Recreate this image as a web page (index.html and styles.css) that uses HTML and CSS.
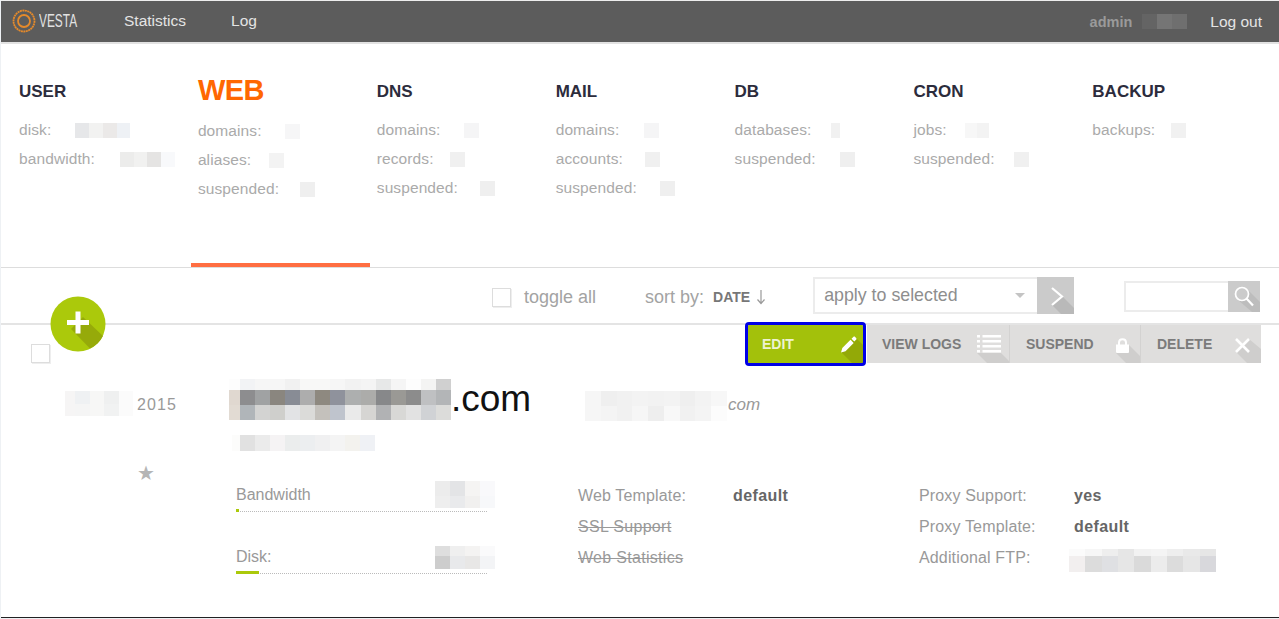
FILE: index.html
```html
<!DOCTYPE html>
<html lang="en">
<head>
  <meta charset="UTF-8">
  <meta name="viewport" content="width=device-width, initial-scale=1.0">
  <title>Vesta - WEB</title>
  <link rel="stylesheet" href="styles.css">
</head>
<body>
  <div class="frame">
    <header class="top-bar">
      <a class="logo">
        <svg width="24" height="24" viewBox="0 0 24 24">
          <circle cx="12" cy="12" r="10.500" fill="none" stroke="#e58a2b" stroke-width="1.800" stroke-dasharray="2 .5"/>
          <circle cx="12" cy="12" r="6" fill="none" stroke="#e58a2b" stroke-width="1.800"/>
        </svg>
        <span class="logo-text">VESTA</span>
      </a>
      <a class="top-link link-stats">Statistics</a>
      <a class="top-link">Log</a>
      <span class="top-user">admin</span>
      <span class="mosaic m-user" data-colors="#646464 #757575 #6f6f6f"></span>
      <a class="top-link link-out">Log out</a>
    </header>

    <nav class="stats">
      <div class="stat-col">
        <h2>USER</h2>
        <p>disk:<span class="mosaic m-disk" data-colors="#e6e7e9 #f2f2f1 #ebe9e8 #eef1f5"></span></p>
        <p>bandwidth:<span class="mosaic m-band" data-colors="#ececeb #f1f1f0 #e5e4e3 #f8f9fb"></span></p>
      </div>
      <div class="stat-col active">
        <h2>WEB</h2>
        <p>domains:<span class="mosaic m-one g23" data-colors="#f6f6f7"></span></p>
        <p>aliases:<span class="mosaic m-one g18" data-colors="#f3f3f3"></span></p>
        <p>suspended:<span class="mosaic m-one g21" data-colors="#efefef"></span></p>
      </div>
      <div class="stat-col">
        <h2>DNS</h2>
        <p>domains:<span class="mosaic m-one g24" data-colors="#f5f5f6"></span></p>
        <p>records:<span class="mosaic m-one g16" data-colors="#f0f0f0"></span></p>
        <p>suspended:<span class="mosaic m-one g22" data-colors="#efefef"></span></p>
      </div>
      <div class="stat-col">
        <h2>MAIL</h2>
        <p>domains:<span class="mosaic m-one g25" data-colors="#f5f5f6"></span></p>
        <p>accounts:<span class="mosaic m-one g22" data-colors="#f0f0f0"></span></p>
        <p>suspended:<span class="mosaic m-one g23" data-colors="#efefef"></span></p>
      </div>
      <div class="stat-col">
        <h2>DB</h2>
        <p>databases:<span class="mosaic m-thin" data-colors="#f1f1f1"></span></p>
        <p>suspended:<span class="mosaic m-one g24" data-colors="#efefef"></span></p>
      </div>
      <div class="stat-col">
        <h2>CRON</h2>
        <p>jobs:<span class="mosaic m-jobs" data-colors="#f7f7f7 #f3f3f3"></span></p>
        <p>suspended:<span class="mosaic m-one g19" data-colors="#f0f0f0"></span></p>
      </div>
      <div class="stat-col">
        <h2>BACKUP</h2>
        <p>backups:<span class="mosaic m-one g16" data-colors="#f1f1f1"></span></p>
      </div>
    </nav>

    <section class="toolbar">
      <a class="add-btn">
        <svg width="56" height="56" viewBox="0 0 56 56">
          <circle cx="28" cy="28" r="27.500" fill="#abc90b"/>
          <path d="M33 21 L53 40 A27.500 27.500 0 0 1 40 52.500 L21 33 Z" fill="#96aa0a"/>
          <path d="M25.500 15.500h5v8.500h8.500v5h-8.500v8.500h-5v-8.500h-8.500v-5h8.500z" fill="#fff"/>
        </svg>
      </a>
      <div class="toolbar-sort">
        <span class="check"></span>
        <span class="toggle-label">toggle all</span>
        <span class="sort-label">sort by:</span>
        <b class="sort-value">DATE</b>
        <svg class="sort-arrow" width="10" height="16" viewBox="0 0 10 16">
          <path d="M5 1v13M1.500 10.500L5 14.500l3.500-4" fill="none" stroke="#999" stroke-width="1.200"/>
        </svg>
      </div>
      <div class="apply-select">
        <span>apply to selected</span>
        <i class="caret"></i>
      </div>
      <a class="apply-btn">
        <svg width="37" height="37" viewBox="0 0 37 37">
          <path d="M15 28 L24 37 H37 V31 L25 19 Z" fill="#b9b9b9"/>
          <path d="M15 11l10 8.500-10 8.500" fill="none" stroke="#fff" stroke-width="2.200"/>
        </svg>
      </a>
      <div class="search-box"></div>
      <a class="search-btn">
        <svg width="32" height="31" viewBox="0 0 32 31">
          <path d="M19 8 L32 21 V31 H24 L10 19 Z" fill="#bdbdbd"/>
          <circle cx="14" cy="13" r="6.500" fill="#cbcbcb" stroke="#fff" stroke-width="1.700"/>
          <path d="M18.500 17.500l6.500 7" stroke="#fff" stroke-width="2.200"/>
        </svg>
      </a>
    </section>

    <section class="row">
      <div class="row-head">
        <span class="check check-row"></span>
        <div class="actions">
          <a class="action action-edit">
            <span>EDIT</span>
            <svg width="38" height="38" viewBox="0 0 38 38">
              <path d="M16 27 L27 38 H38 V20 L31 13 Z" fill="#93a907"/>
              <path d="M16 27.500l1.300-4.500 8.200-8.200 3.200 3.200-8.200 8.200zM26.500 13.800l1.800-1.800c.6-.6 1.300-.6 1.800 0l1 1c.6.600.6 1.200 0 1.800l-1.800 1.800z" fill="#fff"/>
            </svg>
          </a>
          <a class="action action-logs">
            <span>VIEW LOGS</span>
            <svg width="38" height="38" viewBox="0 0 38 38">
              <path d="M6 28 H30 L38 36 V38 H16 Z" fill="#cfcecd"/>
              <path d="M6 10h3v2.500h-3zM11.500 10h18.500v2.500h-18.500zM6 15h3v2.500h-3zM11.500 15h18.500v2.500h-18.500zM6 20h3v2.500h-3zM11.500 20h18.500v2.500h-18.500zM6 25h3v2.500h-3zM11.500 25h18.500v2.500h-18.500z" fill="#fff"/>
            </svg>
          </a>
          <a class="action action-suspend">
            <span>SUSPEND</span>
            <svg width="38" height="38" viewBox="0 0 38 38">
              <path d="M14 28 L24 38 H38 V31 L27 20 Z" fill="#cfcecd"/>
              <path d="M14 19.500h13v7c0 1-.5 1.500-1.500 1.500h-10c-1 0-1.500-.5-1.500-1.500z" fill="#fff"/>
              <path d="M17 20v-2.500c0-4.500 7-4.500 7 0v2.500" fill="none" stroke="#fff" stroke-width="2"/>
            </svg>
          </a>
          <a class="action action-delete">
            <span>DELETE</span>
            <svg width="38" height="38" viewBox="0 0 38 38">
              <path d="M13 27 L24 38 H38 V24 L26 14 Z" fill="#cfcecd"/>
              <path d="M13 14l13 13M26 14l-13 13" stroke="#fff" stroke-width="2.600"/>
            </svg>
          </a>
        </div>
      </div>

      <div class="row-body">
        <div class="row-side">
          <div class="row-date">
            <span class="mosaic m-date" data-col1="10" data-colors="#f6f5f5 #eff1f3 #f7f7f6 #eff0f0 #fbfbfb/#f6f5f5 #f5f5f5 #f7f7f6 #f1f2f2 #fbfbfb"></span>
            <span class="date-year">2015</span>
          </div>
          <span class="star">★</span>
        </div>
        <div class="row-main">
          <div class="domain-line">
            <span class="mosaic m-domain" data-col1="11" data-row1="11" data-colors="#fdfdfd #f2f3f5 #f6f6f6 #f6f6f6 #f1f1f1 #f8f8f7 #f8f8f7 #f6f6f6 #f2f2f2 #f4f4f4 #e7e8e8 #f5f5f5 #fdfdfd #f4f4f3 #d0d0d0/#e0d8d0 #8d8d8f #a0a2a3 #8a867f #888c95 #adadad #8e8980 #8f929c #adafaf #acacaa #87888a #9a9995 #8c8c8c #bfc0c2 #b3b5b7/#e2dbd3 #b0b5b9 #d3d3d2 #cfcfcc #e2e3e5 #dbdbd9 #c4c1bc #bfc4cd #eaeaea #d6d5d3 #b1b2b4 #d8d8d6 #e2e2e2 #d0d2d5 #dcdcda"></span>
            <span class="domain-tld">.com</span>
            <span class="mosaic m-alias-name" data-colors="#f6f6f6 #efefef #f1f1f1 #f3f3f3 #f2f2f2 #f3f3f3 #efefef #f3f3f3 #f7f7f7/#f6f6f6 #f4f4f4 #f1f1f1 #f6f6f6 #eeeeee #f8f8f8 #f1f1f1 #f4f4f4 #fcfcfc"></span>
            <em class="alias-tld">com</em>
          </div>
          <span class="mosaic m-sub" data-col1="8" data-colors="#fcfcfb #e1e1e1 #ebebeb #f5f3f4 #ebeded #eceef0 #f0f0f1 #f4f4f4 #f3f2ee #eff1f5"></span>

          <div class="details">
            <div class="usage">
              <div class="usage-item">
                <div class="usage-head">
                  <span>Bandwidth</span>
                  <span class="mosaic m-usage" data-row1="15" data-colors="#ececec #e3e4e6 #f5f4f3 #f9f9fb/#eeeeee #e9eaec #f1f0ef #f7f8fa"></span>
                </div>
                <div class="bar"><div class="bar-fill" style="width: 1.2%"></div></div>
              </div>
              <div class="usage-item">
                <div class="usage-head">
                  <span>Disk:</span>
                  <span class="mosaic m-usage m-usage-disk" data-row1="10" data-colors="#dedede #efefef #f4f3f2 #fafafb/#cdcdcd #e8e9eb #e8e7e6 #f3f4f6"></span>
                </div>
                <div class="bar"><div class="bar-fill" style="width: 9%"></div></div>
              </div>
            </div>
            <div class="props">
              <div class="prop"><span>Web Template:</span><b>default</b></div>
              <div class="prop off"><span>SSL Support</span></div>
              <div class="prop off"><span>Web Statistics</span></div>
            </div>
            <div class="props">
              <div class="prop"><span>Proxy Support:</span><b>yes</b></div>
              <div class="prop"><span>Proxy Template:</span><b>default</b></div>
              <div class="prop"><span>Additional FTP:</span><span class="mosaic m-ftp" data-row1="7" data-colors="#fbfbfb #f6f6f6 #eeeeee #e6e6e6 #f2f2f2 #f4f4f4 #eeeeee #e9e9e9 #e6e6e6/#f2efef #dcdcdc #dfe0e3 #e6e6e6 #dadada #ececec #dcdcdc #e6e6e6 #d8d8dc"></span></div>
            </div>
          </div>
        </div>
      </div>
    </section>
  </div>
  <script src="mosaic.js"></script>
</body>
</html>
```

FILE: styles.css
```css
* {
  box-sizing: border-box;
}

body {
  margin: 0;
  font-family: "Liberation Sans", Arial, sans-serif;
  background: #eef1f4;
  color: #999;
}

a {
  cursor: pointer;
}

.frame {
  width: 1278px;
  height: 618px;
  margin-left: 1px;
  background: #fff;
  border-bottom: 1px solid #222;
  overflow: hidden;
  position: relative;
}

/* top bar */
.top-bar {
  display: flex;
  align-items: center;
  height: 44px;
  padding-right: 17px;
  background: #5c5c5c;
  border-top: 1px solid #eee;
  border-bottom: 2px solid #e2e2e2;
  font-size: 15.500px;
}

.logo {
  display: flex;
  align-items: center;
  width: 123px;
  padding-left: 11px;
  margin-bottom: 1px;
}

.logo-text {
  width: 38px;
  margin-left: 3px;
  font-size: 18px;
  color: #e2e2e2;
  transform: scaleX(.66);
  transform-origin: left center;
}

.top-link {
  margin-bottom: 2px;
  color: #e4e4e4;
}

.link-stats {
  margin-right: 45px;
}

.top-user {
  margin-left: auto;
  font-size: 14.500px;
  font-weight: bold;
  color: #9a9a9a;
}

.link-out {
  margin-left: 23px;
  margin-bottom: 0;
}

/* mosaics stand in for the blurred values */
.mosaic {
  display: inline-grid;
  vertical-align: middle;
}

.m-user {
  width: 45px;
  height: 15px;
  margin-left: 10px;
}

.m-disk {
  width: 55px;
  height: 15px;
  margin-left: 24px;
}

.m-band {
  width: 55px;
  height: 15px;
  margin-left: 25px;
}

.m-one {
  width: 15px;
  height: 15px;
}

.g16 {
  margin-left: 16px;
}

.g18 {
  margin-left: 18px;
}

.g19 {
  margin-left: 19px;
}

.g21 {
  margin-left: 21px;
}

.g22 {
  margin-left: 22px;
}

.g23 {
  margin-left: 23px;
}

.g24 {
  margin-left: 24px;
}

.g25 {
  margin-left: 25px;
}

.m-thin {
  width: 9px;
  height: 15px;
  margin-left: 20px;
}

.m-jobs {
  width: 24px;
  height: 15px;
  margin-left: 18px;
}

/* stats tabs */
.stats {
  display: grid;
  grid-template-columns: repeat(7, 178.900px);
  height: 224px;
  padding-left: 11px;
  border-bottom: 1px solid #ddd;
}

.stat-col {
  padding: 36px 7px 0;
  border-bottom: 4px solid transparent;
}

.stat-col h2 {
  margin: 0 0 11px;
  font-size: 17px;
  line-height: 24px;
  color: #2c2c3c;
}

.stat-col p {
  margin: 0;
  font-size: 15.500px;
  letter-spacing: .1px;
  line-height: 29px;
  color: #aaa;
  white-space: nowrap;
}

.stat-col.active {
  border-bottom-color: #ff6e42;
}

.stat-col.active h2 {
  margin: -2px 0 14px;
  font-size: 29px;
  letter-spacing: -.5px;
  color: #ff6701;
}

/* toolbar */
.toolbar {
  display: flex;
  align-items: center;
  position: relative;
  height: 57px;
  padding-left: 491px;
  border-bottom: 2px solid #e4e4e4;
}

.toolbar-sort {
  display: flex;
  align-items: center;
  padding-top: 3px;
}

.add-btn {
  position: absolute;
  left: 49px;
  top: 28px;
  height: 56px;
  z-index: 2;
}

.check {
  display: block;
  flex: none;
  width: 19px;
  height: 19px;
  background: #fff;
  border: 1px solid #ddd;
  box-shadow: 1px 1px 0 #eee;
}

.toggle-label {
  margin-left: 13px;
  font-size: 18px;
  color: #a3a3a3;
}

.sort-label {
  margin-left: 49px;
  font-size: 18px;
  color: #a3a3a3;
}

.sort-value {
  margin-left: 9px;
  font-size: 14px;
  color: #777;
}

.sort-arrow {
  margin-left: 6px;
}

.apply-select {
  display: flex;
  align-items: center;
  justify-content: space-between;
  width: 224px;
  height: 37px;
  margin-left: 47px;
  padding: 0 12px 0 9px;
  border: 2px solid #ececec;
  border-right: 0;
  font-size: 17.800px;
  color: #8e8e8e;
}

.caret {
  border: 5px solid transparent;
  border-top: 5px solid #c4c4c4;
  border-bottom: 0;
}

.apply-btn {
  height: 37px;
  background: #cbcbcb;
}

.search-box {
  width: 104px;
  height: 31px;
  margin: 1px 0 0 50px;
  border: 2px solid #ececec;
  border-right: 0;
}

.search-btn {
  height: 31px;
  margin-top: 1px;
  background: #cbcbcb;
}

.apply-btn svg,
.search-btn svg {
  display: block;
}

/* web domain row */
.row-head {
  display: flex;
  height: 38px;
}

.check-row {
  margin: 19px 0 0 30px;
}

.actions {
  display: flex;
  margin-left: auto;
  margin-right: 18px;
}

.action {
  display: flex;
  align-items: center;
  justify-content: space-between;
  height: 38px;
  padding-left: 16px;
  background: #dfdedd;
  font-size: 14px;
  font-weight: bold;
  color: #7b7b7b;
  overflow: hidden;
}

.action svg {
  flex: none;
}

.action-edit {
  width: 115px;
  padding-left: 14px;
  margin-right: 4px;
  background: #a3c10b;
  color: #eef3d0;
  outline: 3px solid #0000e6;
  border-radius: 1px;
  position: relative;
  z-index: 1;
}

.action-logs {
  width: 143px;
  padding-left: 15px;
  border-right: 1px solid #d3d2d1;
}

.action-suspend {
  width: 131px;
  border-right: 1px solid #d3d2d1;
}

.action-delete {
  width: 120px;
}

.row-body {
  display: grid;
  grid-template-columns: 228px 1fr;
}

.row-side {
  padding: 28px 0 0 64px;
}

.row-date {
  display: flex;
  align-items: center;
  gap: 4px;
  height: 25px;
  font-size: 16px;
  letter-spacing: 1.100px;
  color: #999;
}

.date-year {
  margin-top: 2px;
}

.m-date {
  width: 68px;
  height: 25px;
}

.star {
  display: block;
  margin: 47px 0 0 72px;
  font-family: "DejaVu Sans", sans-serif;
  font-size: 20px;
  line-height: 20px;
  color: #b5b5b5;
}

.row-main {
  padding-top: 16px;
}

.domain-line {
  display: flex;
  align-items: center;
  height: 41px;
}

.m-domain {
  width: 222px;
  height: 41px;
}

.domain-tld {
  width: 134px;
  margin-bottom: 2px;
  font-size: 37px;
  color: #111;
}

.m-alias-name {
  width: 142px;
  height: 30px;
  margin-top: 12px;
}

.alias-tld {
  margin-top: 10px;
  margin-left: 1px;
  font-size: 17px;
  color: #999;
}

.m-sub {
  display: grid;
  width: 143px;
  height: 16px;
  margin: 15px 0 0 3px;
}

.details {
  display: flex;
  margin-top: 29px;
  padding-left: 7px;
  font-size: 16px;
}

.usage {
  width: 342px;
}

.usage-item {
  width: 259px;
  height: 62px;
}

.usage-head {
  display: flex;
  align-items: center;
  justify-content: space-between;
  height: 29px;
}

.m-usage {
  width: 60px;
  height: 27px;
}

.m-usage-disk {
  height: 23px;
  margin-top: 2px;
}

.bar {
  width: 251px;
  height: 3px;
  background: repeating-linear-gradient(90deg, #bbb 0 1px, transparent 1px 2px) 0 2px / 100% 1px no-repeat;
}

.bar-fill {
  height: 3px;
  background: #abc90b;
}

.props {
  width: 341px;
  letter-spacing: .15px;
}

.prop {
  display: flex;
  align-items: center;
  height: 31px;
  white-space: nowrap;
}

.prop > span:first-child {
  width: 155px;
}

.prop b {
  letter-spacing: .4px;
  color: #666;
}

.prop.off span {
  letter-spacing: .3px;
  text-decoration: line-through;
}

.m-ftp {
  width: 147px;
  height: 23px;
  margin: 5px 0 0 -5px;
}
```

FILE: mosaic.js
```js
// builds the pixelated blocks from their data-colors lists
document.querySelectorAll('.mosaic').forEach((el) => {
  const rows = el.dataset.colors.split('/').map((row) => row.split(' '));
  const { col1, row1 } = el.dataset;
  const colCount = rows[0].length;
  el.style.gridTemplateColumns = col1 ? `${col1}px repeat(${colCount - 1}, 1fr)` : `repeat(${colCount}, 1fr)`;
  el.style.gridTemplateRows = row1 ? `${row1}px repeat(${rows.length - 1}, 1fr)` : `repeat(${rows.length}, 1fr)`;
  rows.flat().forEach((color) => {
    const cell = document.createElement('span');
    cell.style.background = color;
    el.appendChild(cell);
  });
});
```
